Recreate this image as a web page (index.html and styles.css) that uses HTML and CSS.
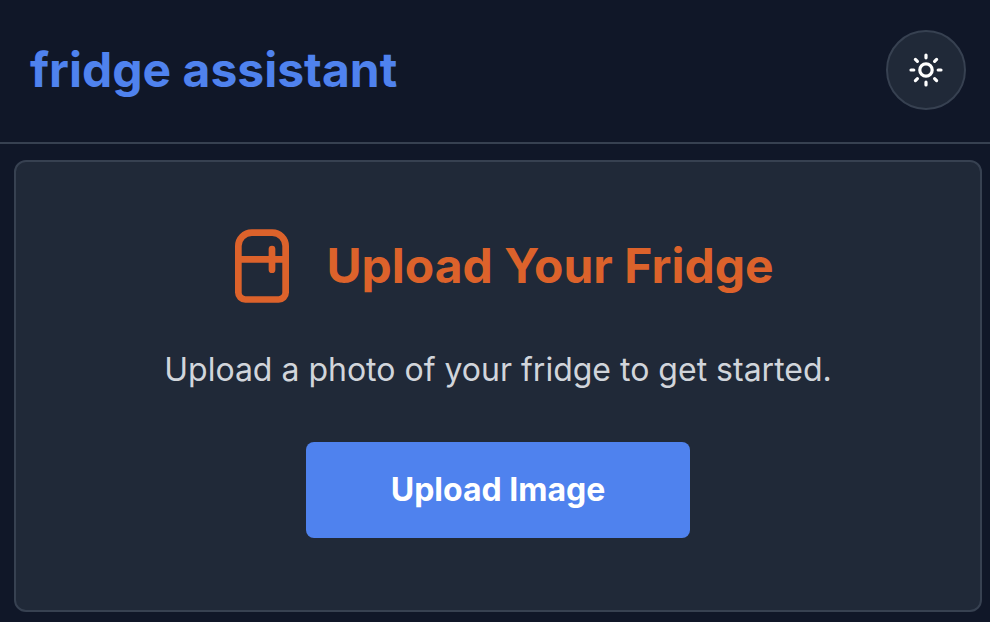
FILE: index.html
```html
<!DOCTYPE html>
<html lang="en">
<head>
<meta charset="utf-8">
<title>fridge assistant</title>
<link rel="stylesheet" href="styles.css">
</head>
<body>
<header class="header">
  <h1 class="brand">fridge assistant</h1>
  <button class="theme-toggle" aria-label="Toggle theme">
    <svg class="sun" viewBox="-20 -20 40 40" fill="none" stroke="currentColor" stroke-width="3.200" stroke-linecap="round"><circle r="6.200"/><path d="M0-15v2.800M0 15v-2.800M-15 0h2.800M15 0h-2.800M-10.600-10.600l2 2M10.600 10.600l-2-2M-10.600 10.600l2-2M10.600-10.600l-2 2"/></svg>
  </button>
</header>
<main class="main">
  <section class="card">
    <div class="heading">
      <svg class="fridge" viewBox="0 0 54 74" fill="none" stroke="currentColor" stroke-width="6.700" stroke-linecap="round"><path d="M3.350 17a13.400 13.400 0 0 1 13.400-13.400h20.500a13.400 13.400 0 0 1 13.400 13.400v46.500a7 7 0 0 1-7 7h-33.300a7 7 0 0 1-7-7zM3.350 30.300h47.300M37 20v20.700"/></svg>
      <h2 class="title">Upload Your Fridge</h2>
    </div>
    <p class="lead">Upload a photo of your fridge to get started.</p>
    <button class="upload">Upload Image</button>
  </section>
</main>
</body>
</html>
```
FILE: styles.css
```css
* { box-sizing: border-box; }
body { margin: 0; height: 622px; overflow: hidden; background: #101728; font-family: Inter, sans-serif; }
.header { height: 144px; padding: 0 24px 2px 30px; display: flex; align-items: center; justify-content: space-between; border-bottom: 2px solid #374151; }
.brand { margin: 0; font-size: 48px; line-height: 64px; font-weight: 700; color: #4f82ee; }
.theme-toggle { width: 80px; height: 80px; padding: 0; border: 2px solid #374151; border-radius: 50%; background: #202938; color: #fff; display: flex; align-items: center; justify-content: center; }
.sun { width: 40px; height: 40px; }
.main { padding: 16px 8px 10px 14px; }
.card { height: 452px; padding-top: 66px; border: 2px solid #374151; border-radius: 12px; background: #202938; display: flex; flex-direction: column; align-items: center; }
.heading { display: flex; align-items: center; gap: 37px; height: 76px; margin-left: 13px; }
.fridge { width: 54px; height: 74px; color: #dc622b; }
.title { margin: 0; font-size: 48px; line-height: 64px; font-weight: 700; color: #dc622b; }
.lead { margin: 42px 0 0; font-size: 32px; line-height: 48px; color: #d1d5db; }
.upload { width: 384px; height: 96px; margin-top: 48px; border: 0; border-radius: 8px; background: #4f82ee; color: #fff; font: 700 32px/48px Inter, sans-serif; }
```
